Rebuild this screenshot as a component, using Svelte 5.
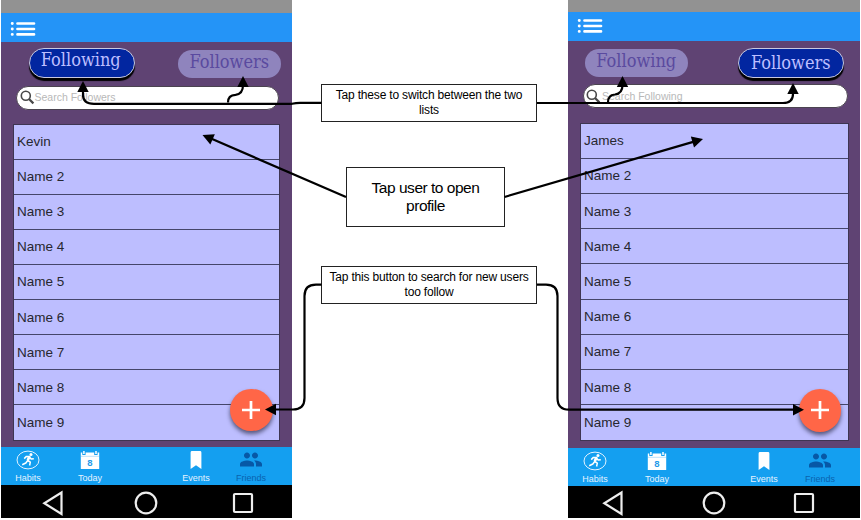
<script>
  const others = ['Name 2', 'Name 3', 'Name 4', 'Name 5', 'Name 6', 'Name 7', 'Name 8', 'Name 9'];
  const phones = [
    { id: 'left', active: 'Following', search: 'Search Followers', names: ['Kevin', ...others] },
    { id: 'right', active: 'Followers', search: 'Search Following', names: ['James', ...others] }
  ];
  const tabs = ['Following', 'Followers'];
  const heads = [
    [83, 81, -90], [243, 76, -90], [793, 83, -90], [622.5, 76, -90],
    [202.5, 135, 203.5], [703, 139, -16.2], [265, 409.5, 180], [804, 409.7, 0]
  ];
</script>

{#snippet phone(p)}
  <section class="phone {p.id}">
    <div class="status"></div>
    <header>
      <svg width="26" height="16" viewBox="0 0 26 16">
        <g stroke="#fff" stroke-width="2.7" stroke-linecap="round">
          <path d="M7.5 2.5H24M7.5 8H24M7.5 13.4H24" />
          <path d="M2.2 2.5h.1M2.2 8h.1M2.2 13.4h.1" stroke-width="2.9" />
        </g>
      </svg>
    </header>
    <main>
      <div class="tabs">
        {#each tabs as t}
          <div class="tab" class:active={t === p.active}><span>{t}</span></div>
        {/each}
      </div>
      <div class="search">
        <svg width="15" height="15" viewBox="0 0 15 15" fill="none" stroke="#484848">
          <circle cx="5.8" cy="5.8" r="4.5" stroke-width="1.6" />
          <path d="M9 9L13.4 13.4" stroke-width="2.2" />
        </svg>
        <span>{p.search}</span>
      </div>
      <div class="list">
        {#each p.names as n}
          <div class="row">{n}</div>
        {/each}
      </div>
      <div class="fab">
        <svg width="20" height="20" viewBox="0 0 20 20"><path d="M10 1v18M1 10h18" stroke="#fff" stroke-width="2.7" /></svg>
      </div>
    </main>
    <nav>
      <div class="item habits">
        <svg width="24" height="20" viewBox="0 0 24 20">
          <ellipse cx="12" cy="10" rx="11" ry="8.9" fill="none" stroke="#e4f3ff" stroke-width="1" />
          <circle cx="15" cy="4.4" r="1.5" fill="#fff" />
          <path d="M8.2 8.6L10.4 6.4L13.8 6.6L11.7 10.5L14.3 12.2L13.6 15.5M11.7 10.5L9.8 13L6.2 14.7M13.6 7.2L15.2 9.1L17.8 8.8" fill="none" stroke="#fff" stroke-width="1.5" stroke-linejoin="round" />
          <path d="M13.2 6.800L11.800 10.300" stroke="#fff" stroke-width="2.600" />
        </svg>
        <b>Habits</b>
      </div>
      <div class="item today">
        <svg width="20" height="20" viewBox="0 0 20 20">
          <path d="M.8 2.4H2.3V5H5.6V2.4H14.2V5H17.6V2.4H19.2V19H.8Z" fill="#fff" />
          <path d="M3.9 1v3M16 1v3" stroke="#fff" stroke-width="1.5" />
          <path d="M1 6.3h18" stroke="#9fd4f8" stroke-width=".7" />
          <text x="10" y="15.7" text-anchor="middle" font-size="9.5" font-weight="bold" font-family="Liberation Sans, sans-serif" fill="#259ae9">8</text>
        </svg>
        <b>Today</b>
      </div>
      <div class="item events">
        <svg width="12" height="20" viewBox="0 0 12 20"><path d="M2 1H10Q11.4 1 11.4 2.4V19L6 15.2L.6 19V2.4Q.6 1 2 1Z" fill="#fff" /></svg>
        <b>Events</b>
      </div>
      <div class="item friends">
        <svg width="26" height="20" viewBox="-1 2.500 26 20" fill="#0758a6">
          <path d="M16 11c1.66 0 2.99-1.34 2.99-3S17.66 5 16 5s-3 1.34-3 3 1.34 3 3 3zm-8 0c1.66 0 2.99-1.34 2.99-3S9.66 5 8 5 5 6.34 5 8s1.34 3 3 3zm0 2c-2.33 0-7 1.17-7 3.500V19h14v-2.500c0-2.330-4.670-3.500-7-3.500zm8 0c-.29 0-.62.02-.97.05 1.160.84 1.970 1.970 1.970 3.450V19h6v-2.500c0-2.330-4.670-3.500-7-3.500z" />
        </svg>
        <b>Friends</b>
      </div>
    </nav>
    <footer>
      <svg class="back" width="22" height="26" viewBox="0 0 22 26"><path d="M19.500 2.500V24L2.300 13.200Z" /></svg>
      <svg class="home" width="24" height="24" viewBox="0 0 24 24"><circle cx="12" cy="12" r="10.300" /></svg>
      <svg class="recent" width="22" height="22" viewBox="0 0 22 22"><rect x="2" y="2" width="18" height="18" rx="1" /></svg>
    </footer>
  </section>
{/snippet}

<div class="board">
  {@render phone(phones[0])}
  <aside>
    <div class="note small">Tap these to switch between the two<br />lists</div>
    <div class="note large">Tap user to open<br />profile</div>
    <div class="note small">Tap this button to search for new users<br />too follow</div>
  </aside>
  {@render phone(phones[1])}
  <svg class="arrows" width="861" height="520" viewBox="0 0 861 520">
    <g fill="none" stroke="#000" stroke-width="2.2">
      <path d="M321.500 102.800H300Q296 102.800 292 103.800H94Q83 103.800 83 95V90" />
      <path d="M228 102.500Q228 95 235.500 94.800Q243 94 243 85" />
      <path d="M537 103H783Q793 103 793 94V91" />
      <path d="M608 102.500Q608 95 615 94.500Q622.500 93.500 622.500 85" />
      <path d="M346 197L211 138.600M504.500 197L694 141.600" />
      <path d="M321.500 284.700H316Q304.500 284.700 304.500 296V398Q304.500 409.500 293 409.500H274" />
      <path d="M537 284.700H546Q557.500 284.700 557.500 296V398Q557.500 409.700 569 409.700H796" />
    </g>
    {#each heads as [x, y, a]}
      <path d="M0 0L-11 5.700V-5.700Z" transform="translate({x} {y}) rotate({a})" />
    {/each}
  </svg>
</div>

<style>
  :global(body) { background: #fff; }
  .board {
    position: relative; width: 861px; height: 520px; overflow: hidden;
    display: flex; padding-left: 1px; box-sizing: border-box;
    font-family: 'Liberation Sans', Arial, sans-serif;
  }
  .phone { width: 291px; height: 517.5px; flex: none; display: flex; flex-direction: column; }
  .right { width: 291.500px; }
  .status { height: 13px; background: #929292; flex: none; }
  .right .status { height: 12px; }
  header { height: 28.500px; background: #2494f7; flex: none; padding: 8px 0 0 9px; box-sizing: border-box; }
  .right header { padding-left: 9px; padding-top: 5.500px; }
  header svg, nav svg, footer svg, .search svg, .fab svg { display: block; flex: none; }
  main { flex: 1; background: #5f4373; position: relative; padding: 6px 12px 0; min-height: 0; }
  .tabs { display: flex; justify-content: space-between; height: 38px; padding: 0 0 0 16px; }
  .left .tabs { margin-right: -1px; }
  .right .tabs { padding: 0 4px 0 4.500px; height: 37.500px; }
  .tab {
    height: 28px; width: 103.500px; box-sizing: border-box; border-radius: 14px;
    background: #8f84bd; color: #5a4a9f; margin-top: 2.500px;
    display: flex; justify-content: center;
    font: 18px/27px 'DejaVu Serif Condensed', 'DejaVu Serif', serif; font-stretch: condensed;
  }
  .tab span { margin-top: -2px; white-space: nowrap; }
  .active {
    width: 105.500px; height: 30px; margin-top: 0; background: #0226a0; color: #bdbeff;
    border: 1px solid #c8c8df; border-radius: 15px; box-shadow: 0 3px 1px #000;
  }
  .left .active span { margin: -3px 2px 0 0; }
  .right .active { margin-top: 1px; }
  .right .active span { margin-top: 0; }
  .search {
    height: 24px; box-sizing: border-box; margin: 0 1px 0 3px; border: 1px solid #4b4450;
    border-radius: 12px; background: #fff; display: flex; align-items: center; padding-left: 2.500px; gap: 0;
    color: #b8b8b8; font-size: 10.500px;
  }
  .right .search { margin-right: 0; margin-left: 2.500px; }
  .right .search span { margin-left: 1px; }
  .search span { margin-top: -1px; }
  .list {
    margin: 14px 0 0; border: 1px solid #3e3552; height: 317px; box-sizing: border-box;
    display: flex; flex-direction: column; background: #bdbeff;
  }
  .right .list { margin: 14.500px -1px 0 0; height: 318px; }
  .row {
    flex: 1; border-bottom: 1.500px solid #45466a; display: flex; align-items: center;
    padding-left: 3px; font-size: 13.500px; color: #27272f;
  }
  .row:last-child { border-bottom: 0; }
  .fab {
    position: absolute; left: 229px; top: 347px; width: 42.500px; height: 42.500px; border-radius: 50%;
    background: #ff6647; display: flex; align-items: center; justify-content: center;
    box-shadow: 0 3px 4px rgba(20, 20, 40, .6);
  }
  .right .fab { left: 230.500px; top: 348.500px; }
  nav { height: 38px; flex: none; background: #149ff0; display: flex; box-sizing: border-box; padding: 3px 0 0 7px; }
  .item { width: 40px; display: flex; flex-direction: column; align-items: center; color: #e5f3ff; }
  .item b { font-weight: 400; font-size: 9px; line-height: 12px; margin-top: 2px; }
  .today { margin-left: 22px; }
  .events { margin-left: 66px; }
  .friends { margin-left: 15px; color: #0a63af; }
  .right .events { margin-left: 67px; }
  .right .friends { margin-left: 16px; }
  footer { height: 32.500px; flex: none; background: #000; display: flex; align-items: center; padding: 2.500px 0 0 41px; box-sizing: border-box; }
  .right footer { height: 31.500px; padding-left: 33.500px; padding-top: 3px; }
  footer svg { fill: none; stroke: #eee; stroke-width: 2.200; }
  .home { margin-left: 70px; }
  .recent { margin-left: 74px; }
  .right .home { margin-left: 78px; }
  .right .recent { margin-left: 67px; }
  aside { width: 276px; flex: none; display: flex; flex-direction: column; align-items: center; padding: 84px 2px 0 0; box-sizing: border-box; }
  .note {
    box-sizing: border-box; border: 1px solid #222; background: #fff; color: #000; text-align: center;
    flex: none; white-space: nowrap;
  }
  .small { width: 216px; height: 38px; font-size: 12px; line-height: 15px; padding-top: 3px; letter-spacing: -.18px; }
  .large { width: 159px; height: 60px; font-size: 15.500px; line-height: 18px; padding-top: 11px; margin: 45px 7px 39px 0; letter-spacing: -.48px; }
  .arrows { position: absolute; left: 0; top: 0; pointer-events: none; }
</style>
